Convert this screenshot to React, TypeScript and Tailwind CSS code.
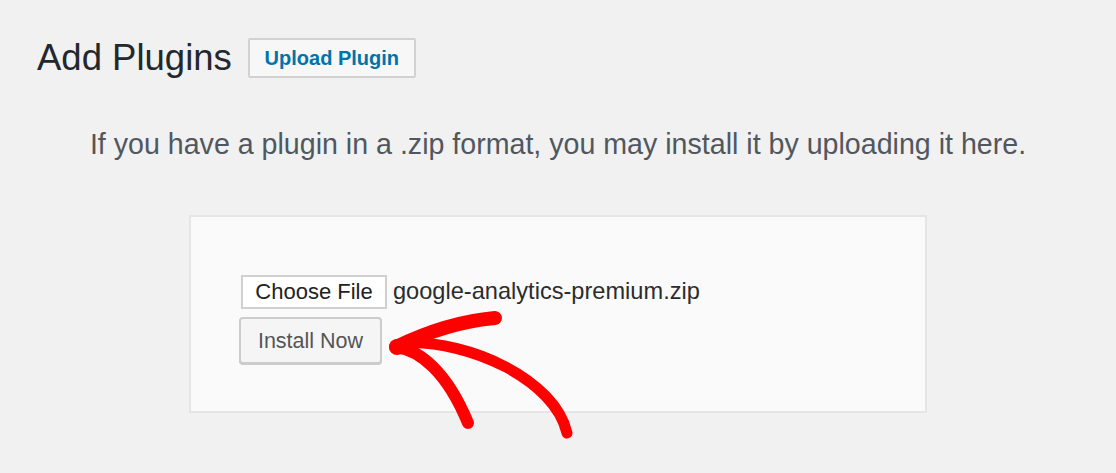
import React from 'react';

const font = { fontFamily: '"Liberation Sans", Arial, sans-serif' };

// 手書き風の赤い矢印（Install Now を指す）
const RedArrow = () => (
  <svg
    className="pointer-events-none absolute inset-0"
    width="1116"
    height="473"
    viewBox="0 0 1116 473"
    fill="none"
  >
    <g stroke="#ff0000" strokeLinecap="round" strokeLinejoin="round">
      <path d="M396 347 C 425 333, 460 321, 495 318" strokeWidth="14" />
      <path d="M396 347 C 420 350, 447 372, 468 423" strokeWidth="12" />
      <path d="M405 343 C 470 340, 555 380, 567 433" strokeWidth="11" />
    </g>
    <circle cx="397" cy="347" r="8" fill="#ff0000" />
  </svg>
);

const App = () => {
  return (
    <div className="relative min-h-[473px] w-full bg-[#f1f1f1]" style={font}>
      <div className="flex items-center gap-4 pl-[37px] pt-[38px]">
        <h1 className="text-[36.5px] leading-none font-normal text-[#23282d]">Add Plugins</h1>
        <button className="h-10 w-[168px] rounded-[2px] border-2 border-[#d2d2d2] bg-[#f7f7f7] text-[20px] font-bold text-[#0073aa]">
          Upload Plugin
        </button>
      </div>

      <p className="mt-[50px] text-center text-[28.6px] leading-8 text-[#50575e]">
        If you have a plugin in a .zip format, you may install it by uploading it here.
      </p>

      <div className="mx-auto mt-[55px] w-[738px] border-2 border-[#e5e5e5] bg-[#fafafa] pb-[47px] pl-[48px] pt-[57px]">
        <div className="flex items-center gap-[6px] pl-[2px]">
          <span className="flex h-[34px] w-[146px] items-center justify-center border-2 border-[#d0d0d0] bg-white text-[22px] text-[#222]">
            Choose File
          </span>
          <span className="text-[23.6px] text-[#2c2c2c]">google-analytics-premium.zip</span>
        </div>
        <button className="mt-2 h-[47px] w-[143px] rounded-[4px] border-2 border-[#cccccc] bg-[#f5f5f5] text-[21.5px] text-[#555] shadow-[0_1px_0_#ccc]">
          Install Now
        </button>
      </div>

      <RedArrow />
    </div>
  );
};

export default App;
